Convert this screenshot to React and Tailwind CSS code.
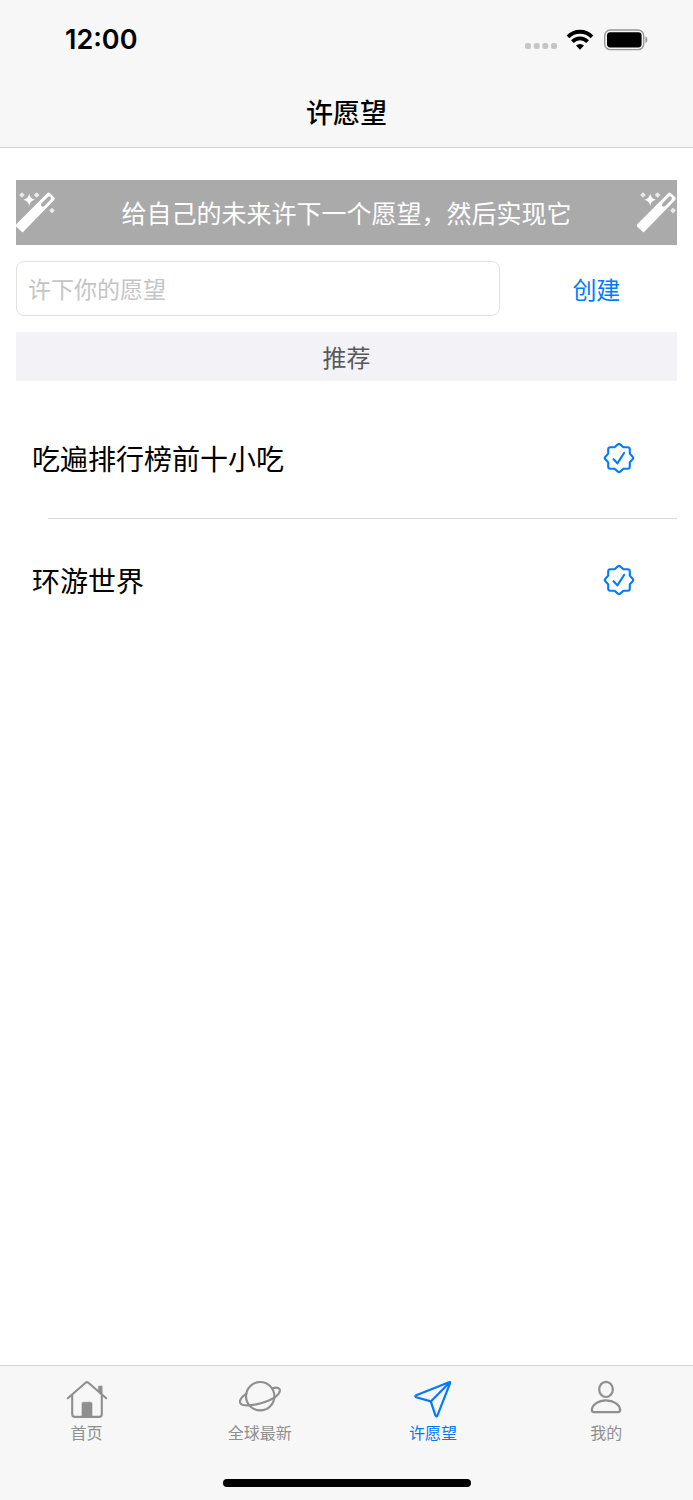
import { useState } from 'react';
import clsx from 'clsx';

const RECOMMENDED = ['吃遍排行榜前十小吃', '环游世界'];

function StatusIcons() {
  return (
    <div className="flex items-center">
      <svg width="32" height="6" viewBox="0 0 32 6" fill="#c6c6c7" className="mt-3 mr-2">
        <rect x="0" y="0" width="6" height="6" rx="2" />
        <rect x="8.7" y="0" width="6" height="6" rx="2" />
        <rect x="17.3" y="0" width="6" height="6" rx="2" />
        <rect x="26" y="0" width="6" height="6" rx="2" />
      </svg>
      <svg width="30" height="22" viewBox="0 0 30 22" fill="none" stroke="#000" strokeWidth="3.8" className="mr-2">
        <path d="M3 7.8a16.8 16.8 0 0 1 24 0" />
        <path d="M7.4 12.6a10.6 10.6 0 0 1 15.2 0" />
        <path d="M11 16.6a5.6 5.6 0 0 1 8 0L15 20.8z" fill="#000" stroke="none" />
      </svg>
      <svg width="46" height="22" viewBox="0 0 46 22" fill="none">
        <rect x="1.7" y="1" width="39" height="19.6" rx="5.6" stroke="#969696" strokeWidth="1.4" />
        <rect x="4" y="3.2" width="34.6" height="15.2" rx="3.4" fill="#000" />
        <path d="M42.4 7.6c2.6 1 2.6 5.6 0 6.6z" fill="#969696" />
      </svg>
    </div>
  );
}

function WandIcon() {
  return (
    <svg width="40" height="42" viewBox="0 0 40 42" fill="#fff">
      <path
        fillRule="evenodd"
        d="M31.2 1.2Q32.6 0 34 1.2l4.2 4.1q1.2 1.4 0 2.8L6.6 40.6 0 34.4V32.6zM32.4 4.4 25.6 11.2q-1.4 2.4.4 3.4 1 .5 2.4-.6l6.2-6.6q.8-1.6-.3-2.6-.9-1-1.9-.4z"
      />
      <path d="M13.2 1.6Q14 7 19 7.8 14 8.6 13.2 14 12.4 8.6 7.2 7.8 12.4 7 13.2 1.6z" />
      <path d="M6 .2 8.8 3 6 5.8 3.2 3zM20.6.2 23.4 3l-2.8 2.8L17.8 3zM36 15.8l2.8 2.8L36 21.4l-2.8-2.8z" opacity=".75" />
    </svg>
  );
}

function SealIcon() {
  return (
    <svg width="32" height="32" viewBox="0 0 32 32" fill="none" stroke="#007aff" strokeWidth="2.1" strokeLinecap="round" strokeLinejoin="round">
      <path d="M14.8 2.4Q16 1.2 17.2 2.4L20.4 5.2H24.7Q26.7 5.3 26.8 7.3V11.6L29.6 14.8Q30.8 16 29.6 17.2L26.8 20.4V24.7Q26.7 26.7 24.7 26.8H20.4L17.2 29.6Q16 30.8 14.8 29.6L11.6 26.8H7.3Q5.3 26.7 5.2 24.7V20.4L2.4 17.2Q1.2 16 2.4 14.8L5.2 11.6V7.3Q5.3 5.3 7.3 5.2H11.6z" />
      <path d="M10.6 17.2 14.4 21.4 21.2 10.8" />
    </svg>
  );
}

function HomeIcon() {
  return (
    <svg width="42" height="40" viewBox="0 0 42 40" fill="none" stroke="currentColor" strokeWidth="2.1" strokeLinecap="round" strokeLinejoin="round">
      <path d="M1.8 18.2 19.6 2.8Q21 1.6 22.4 2.8L40.2 18.2" />
      <path d="M6.2 15.4V34Q6.2 36.9 9 36.9H33Q35.8 36.9 35.8 34V15.4" />
      <path d="M33 6.2H36V14.4L33 11.8z" fill="currentColor" strokeWidth="1" />
      <path d="M16 36.8V23.4Q16 22.2 17.2 22.2H24.8Q26 22.2 26 23.4V36.8z" fill="currentColor" strokeWidth="0.6" />
    </svg>
  );
}

function PlanetIcon() {
  return (
    <svg width="42" height="40" viewBox="0 0 42 40" fill="none" stroke="currentColor" strokeWidth="2.2" strokeLinecap="round">
      <circle cx="21.2" cy="16.2" r="14.2" />
      <path d="M33.2 8.2C38.2 6.8 41.4 8 40.8 11 39.6 16.2 31 20.6 21.8 23.2 12 26 2.6 26.4 1.2 22.8.2 20 3.4 16.4 7.4 13.6" />
    </svg>
  );
}

function PlaneIcon() {
  return (
    <svg width="42" height="40" viewBox="0 0 42 40" fill="none" stroke="currentColor" strokeWidth="2.2" strokeLinecap="round" strokeLinejoin="round">
      <path d="M37 2.2Q38.6 1.6 38 3.4L25.4 35.6Q24.4 37.2 23.4 35.4L18.8 21.4 4.2 17.2Q2.4 16.2 4.2 15.2z" />
      <path d="M18.8 21.4 37.6 2.4" />
    </svg>
  );
}

function PersonIcon() {
  return (
    <svg width="42" height="40" viewBox="0 0 42 40" fill="none" stroke="currentColor" strokeWidth="2.2">
      <ellipse cx="21" cy="9.4" rx="6.8" ry="7.6" />
      <path d="M9.4 32.2Q6.8 32.2 6.8 29.8C7.4 24.6 13.4 20.4 21 20.4S34.6 24.6 35.2 29.8Q35.2 32.2 32.6 32.2z" />
    </svg>
  );
}

const TABS = [
  { id: 'home', label: '首页', Icon: HomeIcon },
  { id: 'latest', label: '全球最新', Icon: PlanetIcon },
  { id: 'wish', label: '许愿望', Icon: PlaneIcon },
  { id: 'me', label: '我的', Icon: PersonIcon },
];

export default function App() {
  const [wish, setWish] = useState('');
  const [wishes, setWishes] = useState(RECOMMENDED);
  const [tab, setTab] = useState('wish');

  const createWish = (e) => {
    e.preventDefault();
    if (!wish.trim()) return;
    setWishes([...wishes, wish.trim()]);
    setWish('');
  };

  return (
    <div className="flex min-h-screen flex-col bg-white font-['Noto_Sans_CJK_SC',sans-serif] text-black">
      <header className="border-b border-[#d3d3d4] bg-[#f7f7f7]">
        <div className="flex h-20 items-center justify-between pr-11 pl-[65px]">
          <span className="font-['Inter',sans-serif] text-[27px] font-semibold">12:00</span>
          <StatusIcons />
        </div>
        <h1 className="flex h-[67px] items-center justify-center pb-0.5 text-[27px] font-medium">许愿望</h1>
      </header>

      <main className="flex flex-1 flex-col gap-4 px-4 pt-8">
        <div className="flex h-[65px] items-center justify-between bg-[#aaaaaa] text-white">
          <WandIcon />
          <p className="text-[25px] whitespace-nowrap">给自己的未来许下一个愿望，然后实现它</p>
          <WandIcon />
        </div>

        <form onSubmit={createWish} className="grid h-[55px] grid-cols-[3fr_1fr] gap-4">
          <input
            type="text"
            aria-label="许下你的愿望"
            placeholder="许下你的愿望"
            value={wish}
            onChange={(e) => setWish(e.target.value)}
            className="min-w-0 rounded-lg border border-[#e2e2e3] px-[11px] text-[23px] outline-none placeholder:text-[#c4c4c6]"
          />
          <button type="submit" className="text-[24px] text-[#007aff]">创建</button>
        </form>

        <h2 className="flex h-[49px] items-center justify-center bg-[#f2f2f7] text-[24px] text-[#59595c]">推荐</h2>

        <ul>
          {wishes.map((item, i) => (
            <li key={item}>
              {i > 0 && <hr className="ml-8 border-[#d8d8da]" />}
              <div className="flex h-[121px] items-center justify-between pr-[42px] pl-4">
                <span className="text-[28px]">{item}</span>
                <button type="button" aria-label={item}>
                  <SealIcon />
                </button>
              </div>
            </li>
          ))}
        </ul>
      </main>

      <footer className="border-t border-[#d3d3d4] bg-[#f7f7f7] pt-3.5">
        <nav className="grid grid-cols-4">
          {TABS.map(({ id, label, Icon }) => (
            <button
              key={id}
              type="button"
              onClick={() => setTab(id)}
              className={clsx('flex flex-col items-center', tab === id ? 'text-[#007aff]' : 'text-[#8f8f8f]')}
            >
              <Icon />
              <span className="text-[16px] leading-6">{label}</span>
            </button>
          ))}
        </nav>
        <div className="mx-auto mt-[35px] mb-[13px] h-2 w-[248px] rounded-full bg-black" />
      </footer>
    </div>
  );
}
